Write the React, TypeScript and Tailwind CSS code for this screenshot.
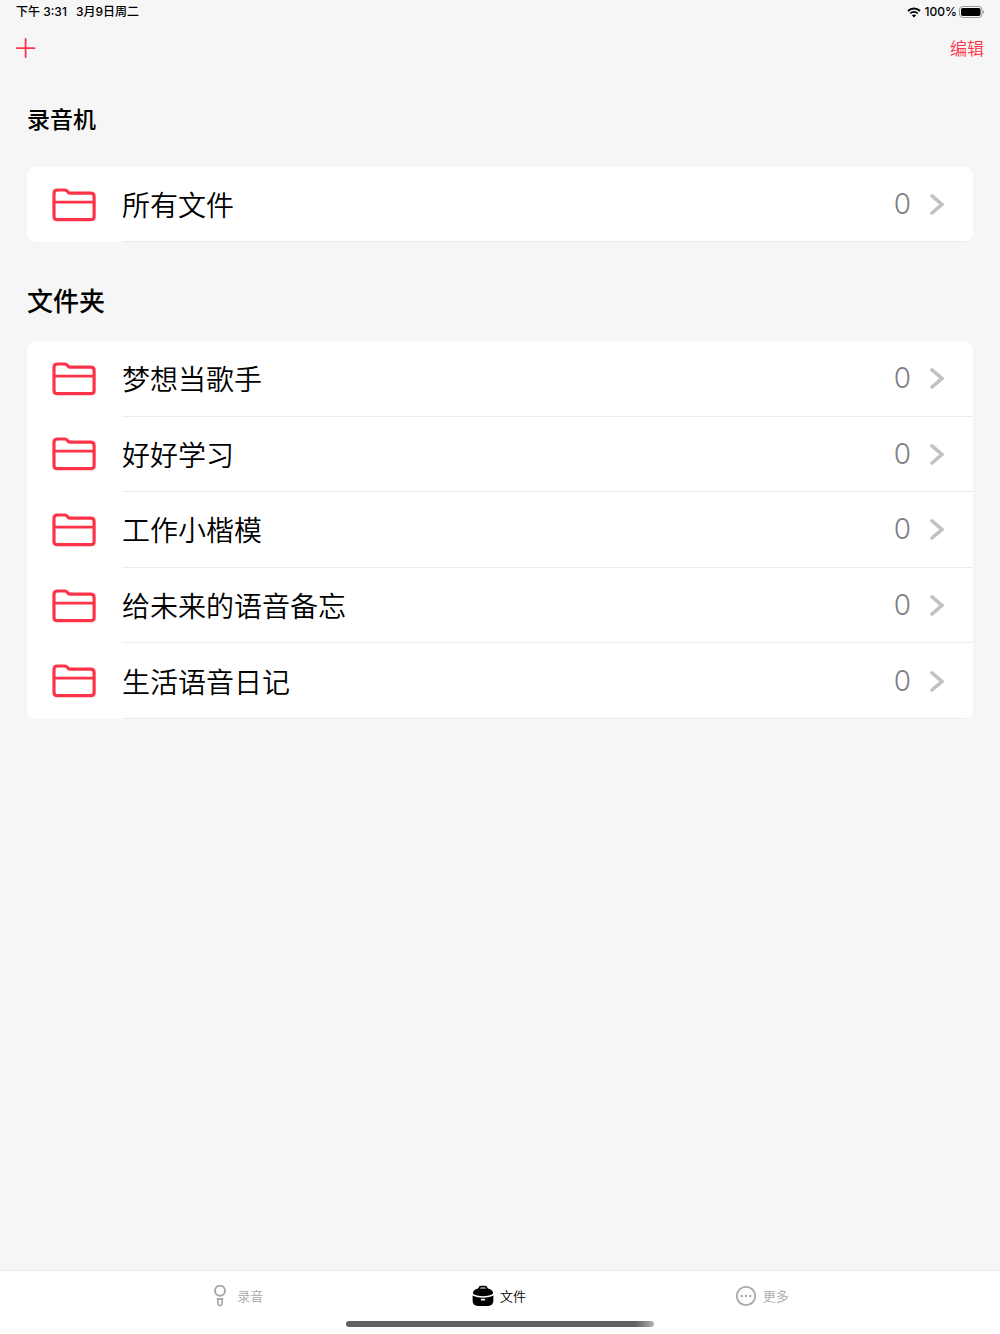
const folders = [
  { name: "梦想当歌手", count: 0 },
  { name: "好好学习", count: 0 },
  { name: "工作小楷模", count: 0 },
  { name: "给未来的语音备忘", count: 0 },
  { name: "生活语音日记", count: 0 },
];

const FolderIcon = () => (
  <svg
    viewBox="0 0 44 34"
    fill="none"
    stroke="currentColor"
    strokeWidth="3.2"
    strokeLinejoin="round"
    className="h-[34px] w-11 shrink-0 text-[#ff3348]"
    aria-hidden="true"
  >
    <path d="M2 5.5C2 3.3 3.2 2 5.4 2H12.8C13.8 2 14.6 2.4 15.3 3.2L16 4.1C16.7 4.9 17.5 5.2 18.5 5.2H38.8C41 5.2 42.1 6.4 42.1 8.5V28.4C42.1 30.5 41 31.6 39 31.6H5.2C3.1 31.6 2 30.5 2 28.4Z" />
    <path d="M2 14.2H42" strokeWidth="2.8" />
  </svg>
);

const ChevronIcon = () => (
  <svg
    viewBox="0 0 16 22"
    fill="none"
    stroke="currentColor"
    strokeWidth="3.6"
    strokeLinecap="round"
    className="h-[22px] w-4 text-[#c2c2c2]"
    aria-hidden="true"
  >
    <path d="M3 2.8 13 11.4 3 20" />
  </svg>
);

const FolderRow = ({ name, count }: { name: string; count: number }) => (
  <li className="flex">
    <a href="#folder" className="flex min-h-[75px] w-full items-stretch pl-[25px]">
      <span className="flex w-[70px] shrink-0 items-center">
        <FolderIcon />
      </span>
      <span className="flex grow items-center justify-between border-b border-[#ececec] pr-7">
        <span className="text-[28px] font-[350] leading-10">{name}</span>
        <span className="flex items-center gap-[18px]">
          <span className="font-[Inter,sans-serif] text-[28px] font-[350] leading-10 text-[#808084]">
            {count}
          </span>
          <ChevronIcon />
        </span>
      </span>
    </a>
  </li>
);

const App = () => {
  return (
    <div className="flex min-h-screen flex-col bg-[#f6f6f6] font-['Noto_Sans_CJK_SC',sans-serif] text-black">
      {/* status bar */}
      <div className="flex h-6 items-center justify-between px-4 font-[Inter,'Noto_Sans_CJK_SC',sans-serif] text-xs font-medium">
        <div className="flex gap-[9px]">
          <span>下午 3:31</span>
          <span>3月9日周二</span>
        </div>
        <div className="flex items-center gap-1">
          <svg viewBox="0 0 14 11" className="h-[11px] w-3.5" aria-hidden="true">
            <g fill="none" stroke="currentColor" strokeWidth="1.9">
              <path d="M1 4C4.4 .7 9.6 .7 13 4" />
              <path d="M3.3 6.4C5.4 4.4 8.6 4.4 10.7 6.4" />
            </g>
            <path d="M7 10.6 4.9 8.4C6.1 7.3 7.9 7.3 9.1 8.4Z" fill="currentColor" />
          </svg>
          <span>100%</span>
          <svg viewBox="0 0 25 12" className="-ml-0.5 h-3 w-[25px]" aria-hidden="true">
            <rect x=".5" y=".5" width="22.5" height="11" rx="3.2" fill="none" stroke="#9b9b9b" />
            <rect x="2" y="2" width="19.5" height="8" rx="1.8" />
            <path d="M24 4.2C25.3 4.8 25.3 7.2 24 7.8Z" fill="#9b9b9b" />
          </svg>
        </div>
      </div>

      {/* toolbar */}
      <header className="flex h-12 items-center justify-between px-4 text-[#ff3348]">
        <button type="button" aria-label="新建文件夹">
          <svg
            viewBox="0 0 20 20"
            stroke="currentColor"
            strokeWidth="1.8"
            strokeLinecap="round"
            className="size-5"
          >
            <path d="M9.6 1V19M.9 10.1H18.5" />
          </svg>
        </button>
        <button type="button" className="text-[17px] font-[350] leading-6">
          编辑
        </button>
      </header>

      <main className="grow px-[27px]">
        <h1 className="mt-[26px] text-[23px] font-medium leading-10">录音机</h1>
        <ul className="mt-[29px] overflow-hidden rounded-[9px] bg-white">
          <FolderRow name="所有文件" count={0} />
        </ul>

        <h2 className="mt-[38px] text-[26px] font-medium leading-10">文件夹</h2>
        <ul className="mt-[21px] grid min-h-[378px] auto-rows-fr overflow-hidden rounded-[9px] bg-white">
          {folders.map((folder) => (
            <FolderRow key={folder.name} name={folder.name} count={folder.count} />
          ))}
        </ul>
      </main>

      {/* tab bar */}
      <footer className="border-t border-[#ebebeb] bg-white">
        <nav className="mx-auto grid h-[50px] w-full max-w-[788px] grid-cols-3 text-[13px] font-[350] text-[#a8a8a8]">
          <a href="#record" className="flex items-center justify-center gap-1.5 pr-0.5">
            <svg
              viewBox="0 0 22 22"
              fill="none"
              stroke="currentColor"
              strokeWidth="2"
              className="size-[22px]"
              aria-hidden="true"
            >
              <circle cx="11" cy="5.8" r="5" />
              <path d="M8.6 14H13.4L12.9 19C12.7 21.2 9.3 21.2 9.1 19Z" strokeWidth="1.8" />
            </svg>
            录音
          </a>
          <a
            href="#files"
            aria-current="page"
            className="flex items-center justify-center gap-1.5 pr-0.5 text-black"
          >
            <svg viewBox="0 0 22 22" fill="currentColor" className="size-[22px]" aria-hidden="true">
              <path
                d="M7 4.6L7.4 2.9C7.6 2 8.1 1.6 9 1.6H13C13.9 1.6 14.4 2 14.6 2.9L15 4.6"
                fill="none"
                stroke="currentColor"
                strokeWidth="1.8"
              />
              <path d="M7.5 3.6H14.5C18 3.6 21 5.6 21 8C21 8.8 20.6 9.3 19.9 9.6C14.6 11.8 7.4 11.8 2.1 9.6C1.4 9.3 1 8.8 1 8C1 5.6 4 3.6 7.5 3.6Z" />
              <path
                fillRule="evenodd"
                d="M.6 10.4C7 13.4 15 13.4 21.4 10.4V15.6C21.4 19.2 19.6 21 16 21H6C2.4 21 .6 19.2 .6 15.6ZM9.4 13.8C9 13.8 8.8 14 8.8 14.4V15C8.8 15.4 9 15.6 9.4 15.6H12.6C13 15.6 13.2 15.4 13.2 15V14.4C13.2 14 13 13.8 12.6 13.8Z"
              />
            </svg>
            文件
          </a>
          <a href="#more" className="flex items-center justify-center gap-1.5 pr-0.5">
            <svg viewBox="0 0 22 22" className="size-[22px]" aria-hidden="true">
              <circle cx="11" cy="11" r="9.2" fill="none" stroke="currentColor" strokeWidth="1.8" />
              <g fill="currentColor">
                <circle cx="6.8" cy="11" r="1.2" />
                <circle cx="11" cy="11" r="1.2" />
                <circle cx="15.2" cy="11" r="1.2" />
              </g>
            </svg>
            更多
          </a>
        </nav>
        {/* home indicator */}
        <div className="mx-auto mb-[7px] h-1.5 w-[308px] rounded-full bg-linear-to-r from-[#626262] from-94% to-[#b5b5b5]" />
      </footer>
    </div>
  );
};

export default App;
